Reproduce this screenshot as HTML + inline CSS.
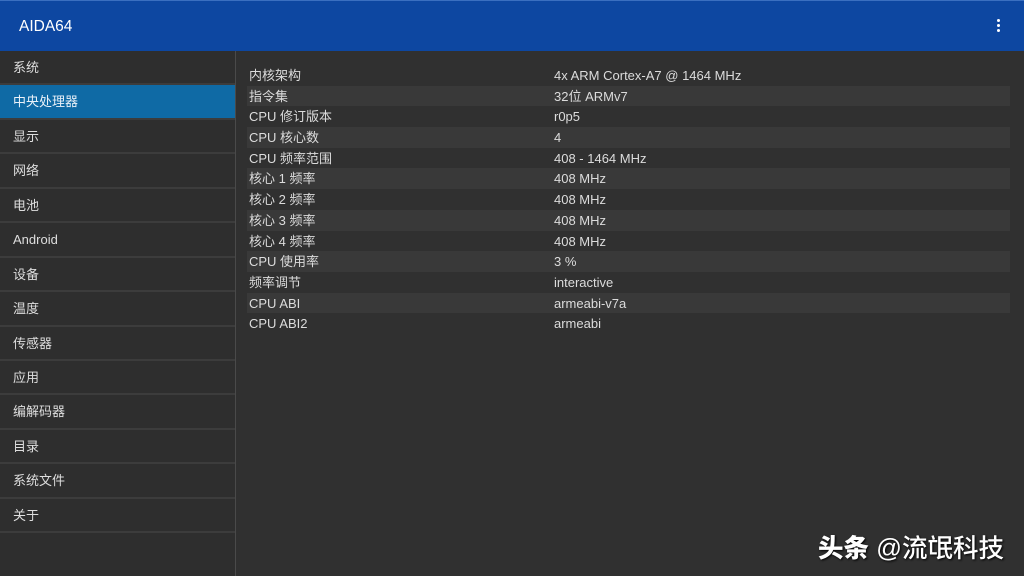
<!DOCTYPE html>
<html><head><meta charset="utf-8"><style>
*{margin:0;padding:0;box-sizing:border-box}
body{width:1024px;height:576px;background:#303030;font-family:"Liberation Sans","Noto Sans CJK SC",sans-serif;color:#dcdcdc;overflow:hidden;position:relative}
.hdr{position:absolute;left:0;top:0;width:1024px;height:51px;background:#0d47a1;border-top:1px solid #3a6fc0}
.hdr .t{position:absolute;left:19px;top:17px;font-size:15.5px;color:#fff}
.dots{position:absolute;left:997px;top:18px;width:4px}
.dots i{display:block;width:3px;height:3px;background:#fff;border-radius:50%;margin-bottom:2px}
.side{position:absolute;left:0;top:51px;width:236px;height:525px;border-right:1px solid #4a4a4a;background:#2e2e2e}
.it{height:34.45px;border-bottom:2px solid #3c3c3c;font-size:13px;padding-left:13px;line-height:34px;color:#dedede}
.it.sel{background:#0f6aa5;color:#e8f0f8}
.rows{position:absolute;left:247px;top:65px;width:763px}
.r{height:20.7px;font-size:13px;line-height:21.5px;position:relative;padding-left:2px}
.r:nth-child(even){background:#393939}
.r span{position:absolute;left:307px}
.wm{position:absolute;left:818px;top:528px;font-size:25.5px;color:#fff;font-family:"Liberation Sans","Noto Sans CJK SC",sans-serif;text-shadow:1px 1px 2px #000;font-weight:500;white-space:nowrap}
.wm b{font-weight:900}
</style></head><body>
<div class="hdr"><div class="t">AIDA64</div><div class="dots"><i></i><i></i><i></i></div></div>
<div class="side">
<div class="it">系统</div><div class="it sel">中央处理器</div><div class="it">显示</div><div class="it">网络</div><div class="it">电池</div><div class="it">Android</div><div class="it">设备</div><div class="it">温度</div><div class="it">传感器</div><div class="it">应用</div><div class="it">编解码器</div><div class="it">目录</div><div class="it">系统文件</div><div class="it">关于</div>
</div>
<div class="rows">
<div class="r">内核架构<span>4x ARM Cortex-A7 @ 1464 MHz</span></div>
<div class="r">指令集<span>32位 ARMv7</span></div>
<div class="r">CPU 修订版本<span>r0p5</span></div>
<div class="r">CPU 核心数<span>4</span></div>
<div class="r">CPU 频率范围<span>408 - 1464 MHz</span></div>
<div class="r">核心 1 频率<span>408 MHz</span></div>
<div class="r">核心 2 频率<span>408 MHz</span></div>
<div class="r">核心 3 频率<span>408 MHz</span></div>
<div class="r">核心 4 频率<span>408 MHz</span></div>
<div class="r">CPU 使用率<span>3 %</span></div>
<div class="r">频率调节<span>interactive</span></div>
<div class="r">CPU ABI<span>armeabi-v7a</span></div>
<div class="r">CPU ABI2<span>armeabi</span></div>
</div>
<div class="wm"><b>头条</b> @流氓科技</div>
</body></html>
